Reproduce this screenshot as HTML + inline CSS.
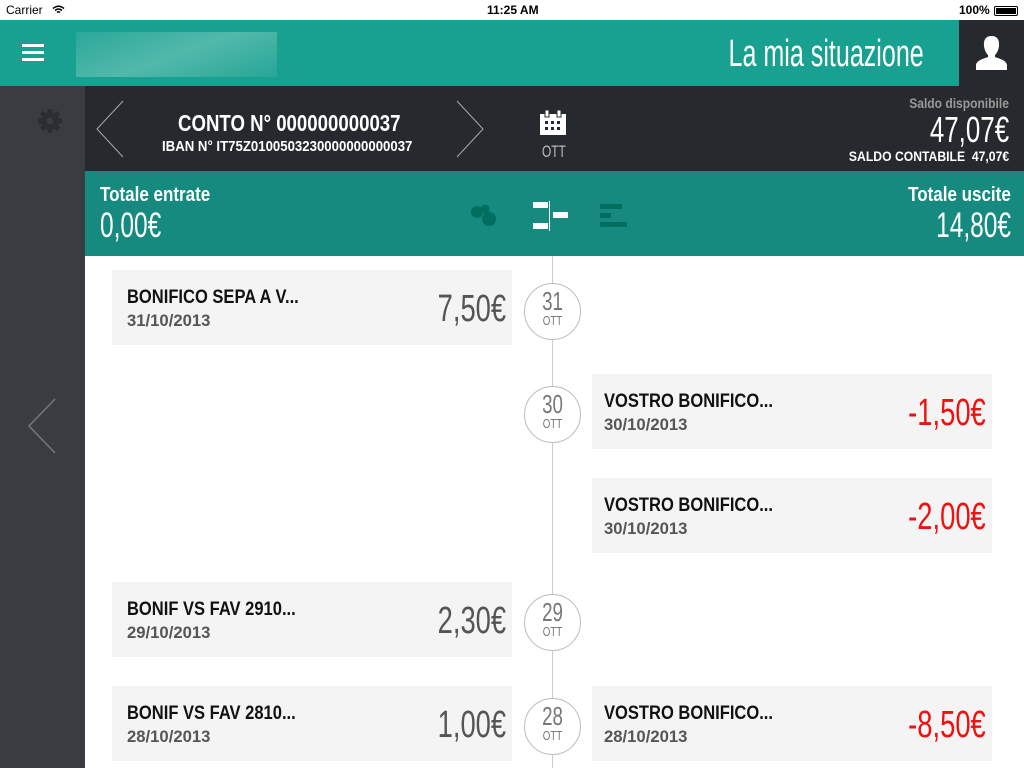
<!DOCTYPE html>
<html><head><meta charset="utf-8"><style>
*{margin:0;padding:0;box-sizing:border-box}
body{width:1024px;height:768px;overflow:hidden;background:#fff;font-family:"Liberation Sans Narrow","Liberation Sans",sans-serif;position:relative}
.abs{position:absolute;white-space:nowrap}
.L{transform-origin:left top}
.R{transform-origin:right top}
.status{top:0;left:0;width:1024px;height:20px;background:#fff;font-family:"Liberation Sans",sans-serif;font-size:12px;color:#000}
.hdr{top:20px;left:0;width:1024px;height:66px;background:#18a190}
.side{top:86px;left:0;width:85px;height:682px;background:#393d41}
.dark{top:86px;left:85px;width:939px;height:85px;background:#26292d;color:#fff}
.tot{top:171px;left:85px;width:939px;height:85px;background:#168a7e;color:#fff}
.card{position:absolute;width:400px;height:75px;background:#f4f4f4}
.card .t{position:absolute;left:15px;top:17px;font-size:19px;font-weight:bold;color:#111;transform:scaleX(.87);transform-origin:left top}
.card .d{position:absolute;left:15px;top:41px;font-size:17px;font-weight:bold;color:#555;transform:scaleX(.98);transform-origin:left top}
.card.rc .t,.card.rc .d{left:12px}
.card .a{position:absolute;right:6px;top:18px;font-size:38px;color:#555;transform:scaleX(.72);transform-origin:right top}
.card .a.r{color:#f01010}
.circ{position:absolute;left:524px;width:57px;height:57px;border-radius:50%;border:1px solid #bbb;background:#fff;text-align:center;color:#777}
.circ b{display:block;font-weight:normal;font-size:26px;line-height:26px;margin-top:4px;transform:scaleX(.72)}
.circ i{display:block;font-style:normal;font-size:13px;line-height:13px;transform:scaleX(.75)}
</style></head><body>
<div class="abs status">
<span class="abs" style="left:6px;top:3px">Carrier</span>
<svg class="abs" style="left:52px;top:5px" width="13" height="10" viewBox="0 0 13 10"><path d="M1 3.5Q6.5-1 12 3.5M3 5.5Q6.5 2.5 10 5.5M5 7.5Q6.5 6 8 7.5" stroke="#000" stroke-width="1.5" fill="none"/></svg>
<span class="abs" style="left:487px;top:3px;font-weight:bold">11:25 AM</span>
<span class="abs" style="left:959px;top:3px;font-weight:bold">100%</span>
<div class="abs" style="left:994px;top:6px;width:24px;height:10px;border:1px solid #000;border-radius:2px;padding:1px"><div style="background:#000;width:100%;height:100%"></div></div>
</div>
<div class="abs hdr">
<div class="abs" style="left:22px;top:24px;width:22px;height:3px;background:#fff"></div>
<div class="abs" style="left:22px;top:31px;width:22px;height:3px;background:#fff"></div>
<div class="abs" style="left:22px;top:38px;width:22px;height:3px;background:#fff"></div>
<div class="abs" style="left:76px;top:12px;width:201px;height:45px;background:linear-gradient(160deg,rgba(255,255,255,.08),rgba(255,255,255,.25) 50%,rgba(255,255,255,.06));"></div>
<div class="abs R" style="right:100px;top:13px;font-size:38px;color:#fff;transform:scaleX(.66)">La mia situazione</div>
<div class="abs" style="left:959px;top:0;width:65px;height:66px;background:#26292d">
<svg class="abs" style="left:15px;top:14px" width="35" height="38" viewBox="0 0 35 38"><path d="M17.5 2c-6 0-8 4-7.5 10 .5 4 2 7 4 9v2c-5 2-11 3-12 8v5h31v-5c-1-5-7-6-12-8v-2c2-2 3.5-5 4-9 .5-6-1.5-10-7.5-10z" fill="#fff"/></svg></div>
</div>
<div class="abs side">
<svg class="abs" style="left:37px;top:22px" width="26" height="26" viewBox="-13 -13 26 26"><g fill="#2a2d31"><circle r="9"/><rect x="-2.5" y="-12" width="5" height="24"/><rect x="-2.5" y="-12" width="5" height="24" transform="rotate(45)"/><rect x="-2.5" y="-12" width="5" height="24" transform="rotate(90)"/><rect x="-2.5" y="-12" width="5" height="24" transform="rotate(135)"/></g><circle r="3.5" fill="#393d41"/></svg>
<svg class="abs" style="left:27px;top:312px" width="30" height="57"><path d="M28 1L2 28 28 55" stroke="#777" stroke-width="1.5" fill="none"/></svg>
</div>
<div class="abs dark">
<svg class="abs" style="left:10px;top:14px" width="30" height="58"><path d="M28 1L2 29 28 57" stroke="#aaa" stroke-width="1" fill="none"/></svg>
<div class="abs L" style="left:93px;top:24px;font-size:23px;font-weight:bold;transform:scaleX(.81)">CONTO N° 000000000037</div>
<div class="abs L" style="left:77px;top:52px;font-size:15px;font-weight:bold;transform:scaleX(.88)">IBAN N° IT75Z0100503230000000000037</div>
<svg class="abs" style="left:370px;top:14px" width="30" height="58"><path d="M2 1L28 29 2 57" stroke="#aaa" stroke-width="1" fill="none"/></svg>
<svg class="abs" style="left:455px;top:24px" width="26" height="26" viewBox="0 0 26 26"><rect x="0" y="4" width="26" height="21" fill="#fff"/><rect x="5" y="0" width="4" height="7" fill="#fff" stroke="#26292d"/><rect x="17" y="0" width="4" height="7" fill="#fff" stroke="#26292d"/><g fill="#26292d"><rect x="5" y="11" width="3" height="3"/><rect x="11" y="11" width="3" height="3"/><rect x="17" y="11" width="3" height="3"/><rect x="5" y="17" width="3" height="3"/><rect x="11" y="17" width="3" height="3"/><rect x="17" y="17" width="3" height="3"/></g></svg>
<div class="abs L" style="left:457px;top:56px;font-size:17px;color:#bbb;transform:scaleX(.7)">OTT</div>
<div class="abs R" style="right:15px;top:9px;font-size:14px;font-weight:bold;color:#999;transform:scaleX(.86)">Saldo disponibile</div>
<div class="abs R" style="right:15px;top:23px;font-size:36px;transform:scaleX(.72)">47,07€</div>
<div class="abs R" style="right:15px;top:62px;font-size:14px;font-weight:bold;transform:scaleX(.87)">SALDO CONTABILE&nbsp; 47,07€</div>
</div>
<div class="abs tot">
<div class="abs L" style="left:15px;top:13px;font-size:20px;font-weight:bold;transform:scaleX(.85)">Totale entrate</div>
<div class="abs L" style="left:15px;top:35px;font-size:35px;transform:scaleX(.7)">0,00€</div>
<svg class="abs" style="left:385px;top:32px" width="30" height="26"><g fill="#006e5e"><circle cx="7" cy="9" r="6"/><circle cx="15" cy="6" r="4.5"/><circle cx="19" cy="16" r="7"/></g></svg>
<svg class="abs" style="left:448px;top:30px" width="40" height="30"><g fill="#fff"><rect x="0" y="1" width="15" height="6"/><rect x="0" y="22" width="15" height="6"/><rect x="16" y="0" width="1" height="30"/><rect x="20" y="11" width="15" height="6"/></g></svg>
<svg class="abs" style="left:515px;top:33px" width="30" height="25"><g fill="#006e5e"><rect x="0" y="0" width="22" height="5"/><rect x="0" y="9" width="11" height="5"/><rect x="0" y="18" width="27" height="5"/></g></svg>
<div class="abs R" style="right:13px;top:13px;font-size:20px;font-weight:bold;transform:scaleX(.85)">Totale uscite</div>
<div class="abs R" style="right:13px;top:35px;font-size:35px;transform:scaleX(.7)">14,80€</div>
</div>
<div class="abs" style="left:552px;top:256px;width:1px;height:512px;background:#ccc"></div>

<div class="card" style="left:112px;top:270px"><div class="t">BONIFICO SEPA A V...</div><div class="d">31/10/2013</div><div class="a">7,50€</div></div>
<div class="circ" style="top:283px"><b>31</b><i>OTT</i></div>

<div class="card rc" style="left:592px;top:374px"><div class="t">VOSTRO BONIFICO...</div><div class="d">30/10/2013</div><div class="a r">-1,50€</div></div>
<div class="circ" style="top:386px"><b>30</b><i>OTT</i></div>

<div class="card rc" style="left:592px;top:478px"><div class="t">VOSTRO BONIFICO...</div><div class="d">30/10/2013</div><div class="a r">-2,00€</div></div>

<div class="card" style="left:112px;top:582px"><div class="t">BONIF VS FAV 2910...</div><div class="d">29/10/2013</div><div class="a">2,30€</div></div>
<div class="circ" style="top:594px"><b>29</b><i>OTT</i></div>

<div class="card" style="left:112px;top:686px"><div class="t">BONIF VS FAV 2810...</div><div class="d">28/10/2013</div><div class="a">1,00€</div></div>
<div class="circ" style="top:698px"><b>28</b><i>OTT</i></div>
<div class="card rc" style="left:592px;top:686px"><div class="t">VOSTRO BONIFICO...</div><div class="d">28/10/2013</div><div class="a r">-8,50€</div></div>
</body></html>
